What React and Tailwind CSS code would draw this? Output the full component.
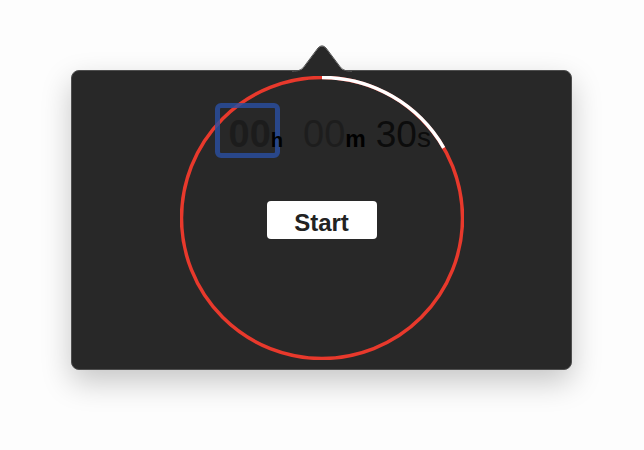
import React from 'react';

const font = { fontFamily: '"Liberation Sans", Arial, sans-serif' };

function Dial() {
  // white arc: 12 o'clock to 60deg clockwise
  const r = 140.5;
  const ex = 142 + r * Math.sin(Math.PI / 3);
  const ey = 142 - r * Math.cos(Math.PI / 3);
  return (
    <svg className="absolute inset-0" width="284" height="284" viewBox="0 0 284 284">
      <circle cx="142" cy="142" r={r} fill="none" stroke="#e8392c" strokeWidth="3.5" />
      <path d={`M142 ${142 - r} A${r} ${r} 0 0 1 ${ex} ${ey}`} fill="none" stroke="#ffffff" strokeWidth="3.5" />
    </svg>
  );
}

function Notch() {
  return (
    <svg className="absolute left-[220px] top-[-26px]" width="60" height="28" viewBox="0 0 60 28">
      <path d="M0 27 C7 27 10.5 24.5 12.5 21.5 L26 3.5 Q30 -0.8 34 3.5 L47.5 21.5 C49.5 24.5 53 27 60 27 L60 28 L0 28 Z" fill="#282828" />
      <path d="M0 26.5 C7 26.5 10.5 24 12.5 21 L26 3 Q30 -1.3 34 3 L47.5 21 C49.5 24 53 26.5 60 26.5" fill="none" stroke="#4e4e4e" strokeWidth="1" />
    </svg>
  );
}

export default function App() {
  return (
    <div className="h-[450px] w-[644px] overflow-hidden bg-[#fdfdfd] pl-[71px] pt-[70px]" style={font}>
      <div className="relative h-[300px] w-[501px] rounded-[8px] border border-[#4e4e4e] bg-[#282828] shadow-[0_12px_30px_rgba(0,0,0,0.22)]">
        <Notch />
        <div className="flex justify-center pt-[5px]">
          <div className="relative h-[284px] w-[284px]">
            <Dial />
            <div className="relative flex flex-col pt-[39px]">
              <div className="ml-[49px] flex items-baseline leading-none">
                <span className="relative">
                  <span className="absolute left-[-14px] top-[-12px] h-[55px] w-[65px] rounded-[6px] border-[5px] border-[rgba(42,78,160,0.82)]" />
                  <span className="relative text-[38px] font-bold text-[#1c1c1c]">00</span>
                  <span className="relative text-[20px] font-bold text-black">h</span>
                </span>
                <span className="ml-[20px] text-[38px] text-[#1d1d1d]">00</span>
                <span className="text-[23px] font-bold text-black">m</span>
                <span className="ml-[10px] text-[37px] text-[#0c0c0c]">30</span>
                <span className="text-[28px] text-[#0c0c0c]">s</span>
              </div>
              <button className="mt-[48px] h-[38px] w-[110px] self-center rounded-[4px] bg-white pt-[6px] text-[24px] leading-none font-bold text-[#222]">
                Start
              </button>
            </div>
          </div>
        </div>
      </div>
    </div>
  );
}
